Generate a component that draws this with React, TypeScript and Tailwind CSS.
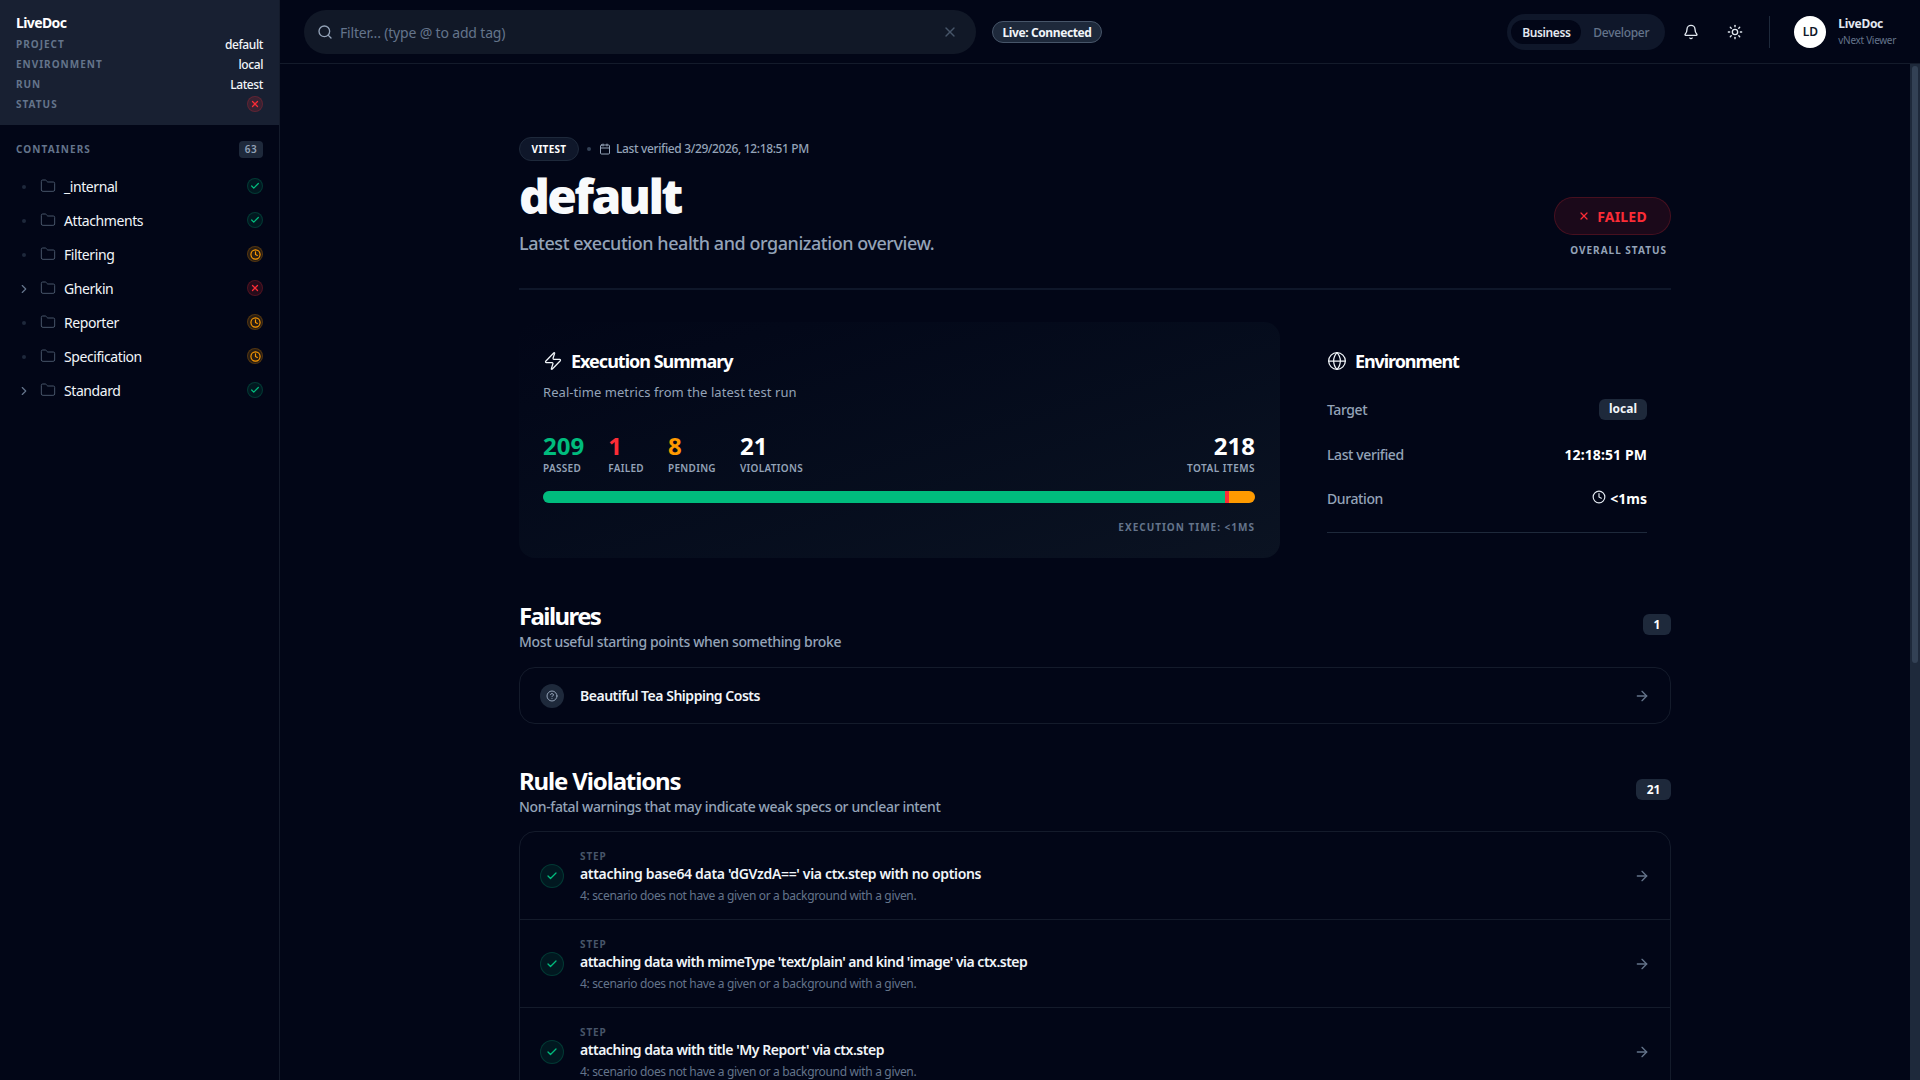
import {
  ArrowRight,
  Bell,
  Calendar,
  Check,
  ChevronRight,
  CircleHelp,
  Clock,
  Folder,
  Globe,
  Search,
  Sun,
  X,
  Zap,
} from "lucide-react";

type Status = "pass" | "fail" | "pending";

const containers: { name: string; status: Status; children?: boolean }[] = [
  { name: "_internal", status: "pass" },
  { name: "Attachments", status: "pass" },
  { name: "Filtering", status: "pending" },
  { name: "Gherkin", status: "fail", children: true },
  { name: "Reporter", status: "pending" },
  { name: "Specification", status: "pending" },
  { name: "Standard", status: "pass", children: true },
];

const violations = [
  { title: "attaching base64 data 'dGVzdA==' via ctx.step with no options", tracking: "tracking-[-0.33px]" },
  { title: "attaching data with mimeType 'text/plain' and kind 'image' via ctx.step", tracking: "tracking-[-0.5px]" },
  { title: "attaching data with title 'My Report' via ctx.step", tracking: "tracking-[-0.47px]" },
];

function StatusDot({ status }: { status: Status }) {
  if (status === "pass") {
    return (
      <span className="flex h-4 w-4 shrink-0 items-center justify-center rounded-full border border-emerald-500/20 bg-emerald-500/10 text-emerald-500">
        <Check size={10} strokeWidth={3} />
      </span>
    );
  }
  if (status === "fail") {
    return (
      <span className="flex h-4 w-4 shrink-0 items-center justify-center rounded-full border border-red-500/20 bg-red-500/15 text-red-500">
        <X size={10} strokeWidth={3} />
      </span>
    );
  }
  return (
    <span className="flex h-4 w-4 shrink-0 items-center justify-center rounded-full border border-amber-500/20 bg-amber-500/15 text-amber-500">
      <Clock size={11} strokeWidth={2.5} />
    </span>
  );
}

function Sidebar() {
  return (
    <aside className="flex w-[280px] shrink-0 flex-col border-r border-[#141b2b] bg-[#020617]">
      <div className="flex h-[125px] flex-col bg-[#182032] px-4 pt-[14px]">
        <div className="mb-[2px] text-[14px] leading-[18px] font-bold tracking-[-0.6px] text-white">LiveDoc</div>
        {["default", "local", "Latest"].map((value, i) => (
          <div key={value} className="flex h-5 items-center justify-between pt-[1px]">
            <span className="text-[10px] font-bold tracking-[1px] text-[#64748b]">
              {["PROJECT", "ENVIRONMENT", "RUN"][i]}
            </span>
            <span className="text-[12px] font-medium tracking-[-0.4px] text-[#f1f5f9]">{value}</span>
          </div>
        ))}
        <div className="flex h-5 items-center justify-between">
          <span className="text-[10px] font-bold tracking-[1px] text-[#64748b]">STATUS</span>
          <StatusDot status="fail" />
        </div>
      </div>
      <div className="flex items-center justify-between px-4 pt-4 pb-[12px]">
        <span className="text-[10px] font-bold tracking-[1.1px] text-[#64748b]">CONTAINERS</span>
        <span className="flex h-[17px] w-6 items-center justify-center rounded bg-[#1e293b] text-[10px] font-semibold tracking-[0.5px] text-[#94a3b8]">
          63
        </span>
      </div>
      <div className="flex flex-col">
        {containers.map((c) => (
          <div key={c.name} className="flex h-[34px] items-center pr-4 pl-[18px]">
            <span className="flex w-3 justify-center text-[#64748b]">
              {c.children ? (
                <ChevronRight size={14} className="shrink-0" />
              ) : (
                <span className="h-1 w-1 rounded-full bg-[#1e293b]" />
              )}
            </span>
            <Folder size={16} strokeWidth={1.5} className="mb-[3px] ml-[10px] text-[#475569]" />
            <span className="mb-[2px] ml-[8px] flex-1 text-[14px] tracking-[-0.42px] text-[#f1f5f9]">{c.name}</span>
            <span className="mb-[2px]">
              <StatusDot status={c.status} />
            </span>
          </div>
        ))}
      </div>
    </aside>
  );
}

function Header() {
  return (
    <header className="flex h-16 shrink-0 items-center border-b border-[#141b2b] bg-[#020617] pr-[24px] pl-6">
      <div className="flex h-11 w-[672px] items-center rounded-full bg-[#111827] px-[13px]">
        <Search size={16} className="text-[#94a3b8]" />
        <span className="mt-[2px] ml-[7px] flex-1 text-[14px] tracking-[-0.17px] text-[#64748b]">
          Filter... (type @ to add tag)
        </span>
        <X size={16} className="mr-[5px] text-[#475569]" />
      </div>
      <span className="ml-4 flex h-[22px] w-[110px] items-center justify-center rounded-full border border-[#475569] bg-[#1e293b] pt-[2px] text-[12px] font-bold tracking-[-0.4px] text-[#f1f5f9]">
        Live: Connected
      </span>
      <div className="ml-auto flex h-9 w-[158px] items-center rounded-full bg-[#0f172a] pl-1">
        <span className="flex h-6 w-[70px] items-center justify-center rounded-full bg-[#020617] pt-[2px] text-[12px] font-semibold tracking-[-0.4px] text-[#e2e8f0]">
          Business
        </span>
        <span className="mt-[2px] ml-3 text-[12px] font-medium tracking-[-0.3px] text-[#64748b]">Developer</span>
      </div>
      <Bell size={16} className="ml-[18px] text-[#e2e8f0]" />
      <Sun size={16} className="ml-[28px] text-[#e2e8f0]" />
      <div className="mr-6 ml-[26px] h-8 w-px bg-[#1e293b]" />
      <div className="flex h-8 w-8 items-center justify-center rounded-full bg-white text-[12px] font-semibold text-[#0f172a]">
        LD
      </div>
      <div className="ml-3 flex flex-col">
        <span className="text-[12px] leading-[16px] font-bold tracking-[-0.3px] text-[#e2e8f0]">LiveDoc</span>
        <span className="mt-[1px] text-[10px] leading-[14px] tracking-[-0.3px] text-[#64748b]">vNext Viewer</span>
      </div>
    </header>
  );
}

function Metric({ value, label, color }: { value: string; label: string; color: string }) {
  return (
    <div className="flex flex-col">
      <span className={`text-[24px] leading-[28px] font-bold ${color}`}>{value}</span>
      <span className="mt-[1px] text-[10px] leading-[14px] font-semibold tracking-[0.3px] text-[#94a3b8]">{label}</span>
    </div>
  );
}

function SummaryCard() {
  return (
    <section className="h-[236px] w-[761px] rounded-2xl bg-gradient-to-br from-[#020617] to-[#0b1322] pt-[26px] pr-[25px] pl-6">
      <div className="flex items-center gap-2">
        <Zap size={20} strokeWidth={1.5} className="text-[#f1f5f9]" />
        <h2 className="text-[18px] leading-[26px] font-bold tracking-[-1px] text-white">Execution Summary</h2>
      </div>
      <p className="mt-[8px] text-[13px] leading-[20px] tracking-[0.06px] text-[#94a3b8]">
        Real-time metrics from the latest test run
      </p>
      <div className="mt-[30px] flex items-start">
        <div className="flex gap-6">
          <Metric value="209" label="PASSED" color="text-emerald-500" />
          <Metric value="1" label="FAILED" color="text-red-500" />
          <Metric value="8" label="PENDING" color="text-amber-500" />
          <Metric value="21" label="VIOLATIONS" color="text-white" />
        </div>
        <div className="ml-auto flex flex-col items-end">
          <span className="text-[24px] leading-[28px] font-bold text-white">218</span>
          <span className="mt-[1px] text-[10px] leading-[14px] font-semibold tracking-[0.5px] text-[#94a3b8]">
            TOTAL ITEMS
          </span>
        </div>
      </div>
      <div className="mt-[16px] flex h-3 overflow-hidden rounded-full bg-[#1e293b]">
        <div className="w-[682px] bg-emerald-500" />
        <div className="w-1 bg-red-500" />
        <div className="flex-1 bg-amber-500" />
      </div>
      <div className="mt-[17px] text-right text-[10px] leading-[14px] font-bold tracking-[1px] text-[#64748b]">
        EXECUTION TIME: &lt;1MS
      </div>
    </section>
  );
}

function EnvironmentCard() {
  return (
    <section className="flex-1 pt-[26px] pr-6 pl-[47px]">
      <div className="flex items-center gap-2">
        <Globe size={20} strokeWidth={1.5} className="text-[#f1f5f9]" />
        <h2 className="text-[18px] leading-[26px] font-bold tracking-[-1.1px] text-white">Environment</h2>
      </div>
      <div className="mt-[24px] flex h-[22px] items-center justify-between">
        <span className="text-[14px] font-medium tracking-[-0.4px] text-[#94a3b8]">Target</span>
        <span className="flex h-[21px] w-[48px] items-center justify-center rounded-md bg-[#1e293b] text-[12px] font-bold text-[#f1f5f9]">
          local
        </span>
      </div>
      <div className="mt-[23px] flex h-[22px] items-center justify-between">
        <span className="text-[14px] font-medium tracking-[-0.4px] text-[#94a3b8]">Last verified</span>
        <span className="text-[14px] font-bold tracking-[0.1px] text-white">12:18:51 PM</span>
      </div>
      <div className="mt-[22px] flex h-[22px] items-center justify-between">
        <span className="text-[14px] font-medium tracking-[-0.4px] text-[#94a3b8]">Duration</span>
        <span className="flex items-center gap-1 text-[14px] font-bold text-white">
          <Clock size={14} className="mb-[2px] text-[#e2e8f0]" />
          &lt;1ms
        </span>
      </div>
      <div className="mt-[23px] h-px bg-[#1e293b]" />
    </section>
  );
}

function SectionHead({
  title,
  sub,
  count,
  width,
  tracking,
}: {
  title: string;
  sub: string;
  count: string;
  width: string;
  tracking: string;
}) {
  return (
    <div className="flex items-center justify-between">
      <div>
        <h2 className={`text-[24px] leading-[30px] font-bold text-white ${tracking}`}>{title}</h2>
        <p className="mt-[1px] text-[14px] leading-[20px] font-medium tracking-[-0.35px] text-[#94a3b8]">{sub}</p>
      </div>
      <span
        className={`mb-[4px] flex h-[21px] items-center justify-center rounded-md bg-[#1e293b] text-[12px] font-bold text-white ${width}`}
      >
        {count}
      </span>
    </div>
  );
}

export default function App() {
  return (
    <div className="flex h-screen overflow-hidden bg-[#020617] font-['Noto_Sans',sans-serif]">
      <Sidebar />
      <div className="relative flex min-w-0 flex-1 flex-col">
        <Header />
        <main className="min-h-0 flex-1 overflow-hidden pr-[10px]">
          <div className="mx-auto w-[1152px] pt-[73px]">
            <div className="flex items-start justify-between border-b-2 border-[#0f172a] pb-[31px]">
              <div>
                <div className="flex h-6 items-center">
                  <span className="flex h-6 w-[60px] items-center justify-center rounded-full border border-[#1e293b] bg-[#0f172a] text-[10px] font-bold tracking-[0.3px] text-white">
                    VITEST
                  </span>
                  <span className="mx-2 h-1 w-1 rounded-full bg-[#334155]" />
                  <Calendar size={12} className="text-[#94a3b8]" />
                  <span className="ml-[5px] text-[12px] font-medium tracking-[-0.37px] text-[#94a3b8]">
                    Last verified 3/29/2026, 12:18:51 PM
                  </span>
                </div>
                <h1 className="mt-[11px] text-[48px] leading-[48px] font-black tracking-[-2.6px] text-[#f8fafc]">
                  default
                </h1>
                <p className="mt-[9px] text-[18px] leading-[28px] font-medium tracking-[-0.45px] text-[#94a3b8]">
                  Latest execution health and organization overview.
                </p>
              </div>
              <div className="mt-[60px] flex flex-col items-end">
                <span className="flex h-[38px] w-[117px] items-center justify-center gap-[7px] rounded-full border border-red-500/20 bg-red-500/10 text-[14px] font-bold tracking-[0.2px] text-red-500">
                  <X size={12} strokeWidth={2.5} />
                  FAILED
                </span>
                <span className="mt-[8px] mr-1 text-[10px] leading-[14px] font-bold tracking-[1px] text-[#94a3b8]">
                  OVERALL STATUS
                </span>
              </div>
            </div>

            <div className="mt-8 flex">
              <SummaryCard />
              <EnvironmentCard />
            </div>

            <div className="mt-[43px]">
              <SectionHead
                title="Failures"
                sub="Most useful starting points when something broke"
                count="1"
                width="w-7"
                tracking="tracking-[-1.6px]"
              />
              <div className="mt-[15px] flex h-[57px] items-center rounded-2xl border border-[#141b2b] pr-5 pl-5">
                <span className="flex h-6 w-6 items-center justify-center rounded-full bg-[#1e293b] text-[#94a3b8]">
                  <CircleHelp size={12} />
                </span>
                <span className="ml-4 flex-1 text-[14px] font-semibold tracking-[-0.48px] text-[#f1f5f9]">
                  Beautiful Tea Shipping Costs
                </span>
                <ArrowRight size={16} className="text-[#64748b]" />
              </div>
            </div>

            <div className="mt-[42px]">
              <SectionHead
                title="Rule Violations"
                sub="Non-fatal warnings that may indicate weak specs or unclear intent"
                count="21"
                width="w-[35px]"
                tracking="tracking-[-1.15px]"
              />
              <div className="mt-[14px] overflow-hidden rounded-2xl border border-[#141b2b]">
                {violations.map((v, i) => (
                  <div
                    key={v.title}
                    className={`flex items-center pr-5 pl-5 ${i > 0 ? "h-[88px] border-t border-[#141b2b]" : "h-[87px]"}`}
                  >
                    <span className="flex h-6 w-6 items-center justify-center rounded-full border border-emerald-500/20 bg-emerald-500/10 text-emerald-500">
                      <Check size={12} strokeWidth={2.5} />
                    </span>
                    <div className="ml-4 flex-1 pt-[2px]">
                      <div className="text-[10px] leading-[14px] font-bold tracking-[0.9px] text-[#475569]">STEP</div>
                      <div className={`mt-[1px] text-[14px] leading-[20px] font-semibold text-[#f1f5f9] ${v.tracking}`}>
                        {v.title}
                      </div>
                      <div className="mt-[4px] text-[12px] leading-[16px] tracking-[-0.34px] text-[#64748b]">
                        4: scenario does not have a given or a background with a given.
                      </div>
                    </div>
                    <ArrowRight size={16} className="text-[#64748b]" />
                  </div>
                ))}
              </div>
            </div>
          </div>
        </main>
        {/* scrollbar overlay, the headless browser hides the native one */}
        <div className="absolute top-16 right-0 bottom-0 w-[10px] bg-[#1e293b]">
          <div className="mx-auto mt-[2px] h-[597px] w-1.5 rounded-full bg-[#334155]" />
        </div>
      </div>
    </div>
  );
}
